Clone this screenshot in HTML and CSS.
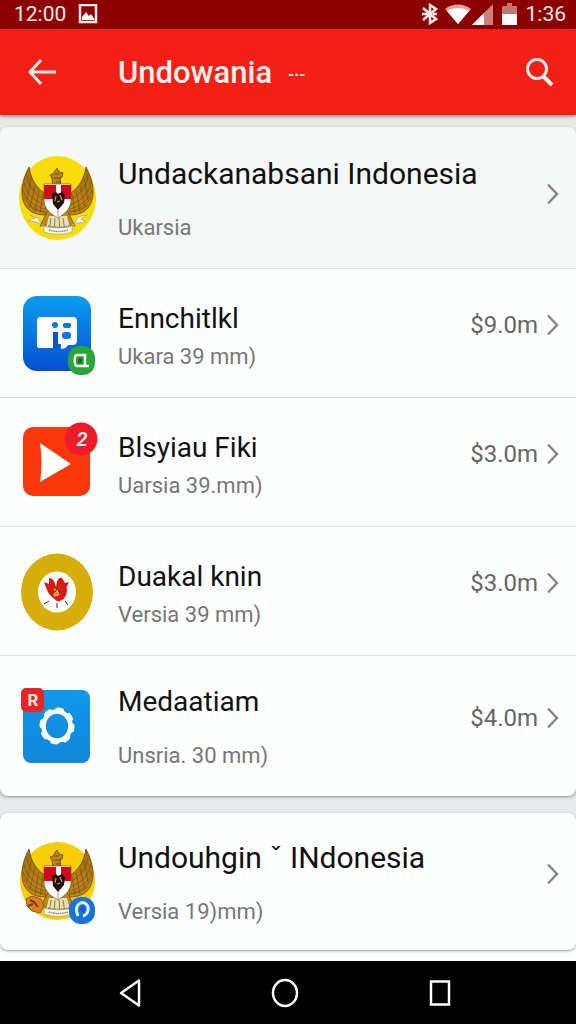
FILE: index.html
```html
<!DOCTYPE html>
<html lang="id">
<head>
    <meta charset="UTF-8">
    <meta name="viewport" content="width=device-width, initial-scale=1">
    <title>Undowania</title>
    <link rel="stylesheet" href="styles.css">
</head>
<body>
    <!-- shared drawings -->
    <svg class="defs" aria-hidden="true">
        <defs>
            <linearGradient id="blue" x1="0" y1="0" x2="0" y2="1">
                <stop offset="0" stop-color="#0c9cf0"/>
                <stop offset="1" stop-color="#0550d2"/>
            </linearGradient>
            <linearGradient id="sky" x1="0" y1="0" x2="0" y2="1">
                <stop offset="0" stop-color="#1098e8"/>
                <stop offset="1" stop-color="#1286dc"/>
            </linearGradient>
            <linearGradient id="wing" x1="0" y1="0" x2="0" y2="1">
                <stop offset="0" stop-color="#a06c14"/>
                <stop offset="1" stop-color="#c48a18"/>
            </linearGradient>
            <g id="half-wing">
                <path d="M11 7C3 22 2 36 7 45c4 7 11 10 21 10V34C18 28 13 19 11 7z" fill="url(#wing)" stroke="#664509" stroke-width="0.8"/>
                <path d="M9 15c1 12 9 20 18 25M6 22c2 12 10 19 21 23M5 30c3 10 11 16 22 19M6 37c4 8 11 12 21 15M9 45c5 4 11 6 17 7M13 18l-4 22M17 26l-5 21M21 30l-4 22M25 34l-3 19" fill="none" stroke="#6b4a10" stroke-width="0.6"/>
            </g>
            <symbol id="garuda" viewBox="0 0 80 88">
                <use href="#half-wing"/>
                <use href="#half-wing" transform="matrix(-1 0 0 1 79 0)"/>
                <path d="M35 26l-1-8-2-3 3-1 2-3 2-3 2 4 4 1-1 4-2 1 1 8z" fill="#b98718" stroke="#5d400a" stroke-width="0.8"/>
                <path d="M37 14h4M36 18h7M38 22h5" stroke="#5d400a" stroke-width="0.8"/>
                <path d="M31 48l-9 18 7-1 8-13zM48 48l9 18-7-1-8-13z" fill="#bd861a" stroke="#6b4a10" stroke-width="0.8"/>
                <path d="M31 56l-4 16h26l-4-16z" fill="#e8dfb0"/>
                <path d="M33 58l-2 13M37 58l-1 14M41 58l1 14M45 58l2 13" stroke="#8b8247"/>
                <path d="M26 24h27v16c0 9-7 14-13 18-7-4-14-9-14-18z" fill="#fff" stroke="#7b3c12" stroke-width="0.6"/>
                <path d="M26 25h12v14H26zM43 25h10v14H43z" fill="#d20b1a"/>
                <path d="M34 34l4-2 2 2 4-2 3 3-1 8-6 7-5-6z" fill="#201009"/>
                <path d="M38 36l-1 5M42 35l2 5M39 42l3-1" stroke="#d7a24b" stroke-width="1.2"/>
                <path d="M40 50v7" stroke="#e27b91"/>
                <path d="M12 55l8 3 3 6 5 3h24l5-4 3-6 9-2-6 4 5 3-9 1-5 3v6c-9 3-19 3-28 0v-6l-7-4-9-1 7-3z" fill="#f9f8ed" stroke="#a7a180" stroke-width="0.7"/>
                <path d="M31 70c6 2 13 2 19 0M30 66c7 2 14 2 21 0" fill="none" stroke="#7e8470" stroke-width="1.4" stroke-dasharray="1.5 .7"/>
            </symbol>
            <symbol id="chevron" viewBox="0 0 14 22">
                <path d="M2 1.500l9 9.500-9 9.500" fill="none" stroke="#858585" stroke-width="2.400"/>
            </symbol>
        </defs>
    </svg>

    <div class="status-bar">
        <span>12:00</span>
        <svg width="20" height="20" viewBox="0 0 20 20">
            <path d="M2 1h16v17H2z" fill="none" stroke="#ffe9e7" stroke-width="2.500"/>
            <path d="M4 16v-3l4-5 3 4 2-2 4 6z" fill="#fff"/>
        </svg>
        <div class="status-icons">
            <svg width="16" height="22" viewBox="0 0 16 22">
                <path d="M1 5l13 11-6 4V2l6 4L1 17M0 11h6M11 11h4" fill="none" stroke="#ffe9e7" stroke-width="2.500"/>
            </svg>
            <svg width="26" height="22" viewBox="0 0 26 22">
                <path d="M0 6C7 0 19 0 26 6L13 21z" fill="#e0a19f"/>
                <path d="M2 8c7-4 15-4 22 0L13 21z" fill="#fff"/>
            </svg>
            <svg width="21" height="22" viewBox="0 0 21 22">
                <path d="M0 22L21 1v21z" fill="#cc7f7d"/>
                <path d="M0 22L12 10v12z" fill="#fff"/>
            </svg>
            <svg class="battery" width="15" height="22" viewBox="0 0 15 22">
                <path d="M0 3h5V0h5v3h5v8H0z" fill="#c27573"/>
                <path d="M0 11h15v11H0z" fill="#fff"/>
            </svg>
            <span>1:36</span>
        </div>
    </div>

    <header class="app-bar">
        <button class="bar-button" type="button" aria-label="Kembali">
            <svg width="30" height="28" viewBox="0 0 30 28">
                <path d="M29 14H3M14 2L3 14l11 12" fill="none" stroke="#fff0ee" stroke-width="3"/>
            </svg>
        </button>
        <h1>Undowania <span class="dash">-·-</span></h1>
        <button class="bar-button" type="button" aria-label="Cari">
            <svg width="28" height="30" viewBox="0 0 28 30">
                <circle cx="11" cy="12" r="9.500" fill="none" stroke="#fff0ee" stroke-width="3"/>
                <path d="M17 19l9 9" stroke="#fff0ee" stroke-width="4"/>
            </svg>
        </button>
    </header>

    <main>
        <section class="card">
            <a class="row tall featured" href="#">
                <svg class="icon" viewBox="0 0 80 88">
                    <ellipse cx="39.500" cy="44" rx="38.500" ry="42" fill="#f8dc0b"/>
                    <use href="#garuda" y="6" width="80" height="88"/>
                </svg>
                <div class="text">
                    <h2>Undackanabsani Indonesia</h2>
                    <p>Ukarsia</p>
                </div>
                <svg class="chevron"><use href="#chevron"/></svg>
            </a>
            <a class="row" href="#">
                <svg class="icon" viewBox="0 0 80 88">
                    <rect x="5" y="7" width="68" height="75" rx="14" fill="url(#blue)"/>
                    <path d="M22 28h33c3 0 4 2 4 4v20c0 3-2 4-5 4h-4c-2 3-4 4-7 4v-5h-3v5h-4v-1H22c-3 0-3-2-3-4V32c0-2 1-4 3-4z" fill="#fff"/>
                    <circle cx="37" cy="36" r="3" fill="#0877df"/>
                    <path d="M35 43h5v17h-5z" fill="#0757c8"/>
                    <rect x="45" y="34" width="8" height="5" rx="2" fill="#0877df"/>
                    <rect x="44" y="43" width="9" height="7" rx="3" fill="#0877df"/>
                    <rect x="50" y="57" width="27" height="29" rx="12" fill="#28a637"/>
                    <path d="M59 66h8v11h-8c-3 0-3-11 0-11zM66 77h5" fill="none" stroke="#fff" stroke-width="2.500"/>
                    <rect x="60" y="69" width="4" height="5" fill="#146f29"/>
                </svg>
                <div class="text">
                    <h2>Ennchitlkl</h2>
                    <p>Ukara 39 mm)</p>
                </div>
                <span class="price">$9.0m</span>
                <svg class="chevron"><use href="#chevron"/></svg>
            </a>
            <a class="row" href="#">
                <svg class="icon" viewBox="0 0 80 88">
                    <rect x="5" y="9" width="67" height="69" rx="10" fill="#fa3708"/>
                    <path d="M22 25l31 21-31 18c2-12 2-25 0-39z" fill="#fff"/>
                    <circle cx="63" cy="21" r="16.500" fill="#ec1d29"/>
                    <text class="badge-number" x="64" y="28">2</text>
                </svg>
                <div class="text">
                    <h2>Blsyiau Fiki</h2>
                    <p>Uarsia 39.mm)</p>
                </div>
                <span class="price">$3.0m</span>
                <svg class="chevron"><use href="#chevron"/></svg>
            </a>
            <a class="row" href="#">
                <svg class="icon" viewBox="0 0 80 88">
                    <ellipse cx="39" cy="45" rx="36" ry="38.500" fill="#d5ae0c"/>
                    <ellipse cx="39" cy="45" rx="19" ry="20.500" fill="#fff"/>
                    <path d="M31 31c4 0 6 4 7 9 1-6 2-10 6-9l3 5 4-1c-1 3-3 4-2 8 0 7-5 12-10 11-4-3-8-6-10-11l-3-8 5 2z" fill="#d91916"/>
                    <path d="M36 42l6 5M41 41l-5 7M36 49l5-2" stroke="#eaaf45" stroke-width="2"/>
                    <path d="M37 45l3-4 2 6M31 54l-5 3M39 56v5M47 54l3 4" fill="none" stroke="#452313"/>
                </svg>
                <div class="text">
                    <h2>Duakal knin</h2>
                    <p>Versia 39 mm)</p>
                </div>
                <span class="price">$3.0m</span>
                <svg class="chevron"><use href="#chevron"/></svg>
            </a>
            <a class="row tall" href="#">
                <svg class="icon" viewBox="0 0 80 88">
                    <rect x="5" y="8" width="67" height="73" rx="8" fill="url(#sky)"/>
                    <ellipse cx="39" cy="44" rx="15" ry="16" fill="none" stroke="#fff" stroke-width="5" stroke-linecap="round" stroke-dasharray="4 8.200"/>
                    <ellipse cx="39" cy="44" rx="13.500" ry="14.500" fill="none" stroke="#fff" stroke-width="4.500"/>
                    <rect x="3" y="6" width="23" height="24" rx="5" fill="#e42627"/>
                    <text class="badge-letter" x="15" y="24">R</text>
                </svg>
                <div class="text">
                    <h2>Medaatiam</h2>
                    <p>Unsria. 30 mm)</p>
                </div>
                <span class="price">$4.0m</span>
                <svg class="chevron"><use href="#chevron"/></svg>
            </a>
        </section>

        <section class="card">
            <a class="row tall last" href="#">
                <svg class="icon" viewBox="0 0 80 88">
                    <ellipse cx="39.500" cy="43" rx="37.500" ry="39" fill="#f7cd05"/>
                    <use href="#garuda" y="4" width="80" height="88"/>
                    <path d="M8 61l6-3 9 3 3 7-4 7-8-2-5-5z" fill="#d6812c" stroke="#985417"/>
                    <path d="M12 62l4 2 4 5M10 68l5-2" fill="none" stroke="#7e3511" stroke-width="2"/>
                    <rect x="51" y="59" width="26" height="27" rx="12" fill="#1475e0"/>
                    <path d="M60 78c-6-14 8-17 10-9 1 5-2 8-5 9" fill="none" stroke="#e7f3ff" stroke-width="3"/>
                    <path d="M62 71c3-6 6-1 4 4z" fill="#3150bd"/>
                </svg>
                <div class="text">
                    <h2>Undouhgin ˇ INdonesia</h2>
                    <p>Versia 19)mm)</p>
                </div>
                <svg class="chevron"><use href="#chevron"/></svg>
            </a>
        </section>
    </main>

    <nav class="nav-bar">
        <button type="button" aria-label="Kembali">
            <svg width="24" height="30" viewBox="0 0 24 30">
                <path d="M21 2.500v25L3 15z" fill="none" stroke="#fff" stroke-width="2.500" stroke-linejoin="round"/>
            </svg>
        </button>
        <button type="button" aria-label="Beranda">
            <svg width="28" height="30" viewBox="0 0 28 30">
                <ellipse cx="14" cy="15" rx="12" ry="13" fill="none" stroke="#fff" stroke-width="2.500"/>
            </svg>
        </button>
        <button type="button" aria-label="Terbaru">
            <svg width="24" height="30" viewBox="0 0 24 30">
                <rect x="3" y="3.500" width="18" height="23" fill="none" stroke="#fff" stroke-width="2.500"/>
            </svg>
        </button>
    </nav>
</body>
</html>
```
FILE: styles.css
```css
* {
    box-sizing: border-box;
}

body {
    display: flex;
    flex-direction: column;
    min-height: 100vh;
    margin: 0;
    font-family: Roboto, "Liberation Sans", sans-serif;
    background-color: #fdfefe;
}

h1, h2, p {
    margin: 0;
    font-weight: 400;
}

svg {
    flex-shrink: 0;
    display: block;
}

button {
    display: flex;
    align-items: center;
    justify-content: center;
    padding: 0;
    border: none;
    background: none;
    cursor: pointer;
}

.defs {
    position: absolute;
    width: 0;
    height: 0;
}

/* status bar */
.status-bar {
    display: flex;
    align-items: center;
    gap: 12px;
    height: 29px;
    padding: 0 10px 2px 14px;
    font-size: 21px;
    color: #ffe9e7;
    background-color: #8d0000;
}

.status-icons {
    display: flex;
    align-items: center;
    gap: 1px;
    margin-left: auto;
}

.status-icons svg:first-child {
    margin-right: 6px;
}

.battery {
    margin: 0 8px;
}

/* app bar */
.app-bar {
    position: relative;
    display: flex;
    align-items: center;
    height: 86px;
    padding: 0 12px 0 18px;
    color: #fff0ee;
    background-color: #f21f15;
    box-shadow: 0 1px 4px rgba(0, 0, 0, 0.5);
}

.app-bar h1 {
    flex: 1;
    margin-left: 52px;
    font-size: 31px;
    font-weight: 500;
}

.dash {
    margin-left: 8px;
    font-size: 16px;
    font-weight: 700;
    vertical-align: middle;
}

.bar-button {
    width: 48px;
    height: 48px;
}

/* lists */
main {
    display: flex;
    flex-direction: column;
    flex: 1;
    gap: 17px;
    padding-top: 12px;
    background: linear-gradient(#e8ebeb, #e8ebeb) no-repeat 0 0 / 100% 720px;
}

.card {
    overflow: hidden;
    border-radius: 8px;
    background-color: #fdfefe;
    box-shadow: 0 1px 3px rgba(0, 0, 0, 0.4);
}

.row {
    display: flex;
    align-items: center;
    min-height: 129px;
    padding: 0 16px 0 18px;
    color: #111;
    text-decoration: none;
    border-top: 1px solid #dcdfdf;
}

.row:first-child {
    border-top: none;
}

.row.tall {
    min-height: 141px;
}

.row.last {
    min-height: 137px;
}

.row.featured {
    background-color: #f6f8f8;
}

.icon {
    width: 80px;
    height: 88px;
}

.text {
    flex: 1;
    min-width: 0;
    margin-left: 20px;
    padding-top: 8px;
}

.text h2 {
    font-size: 28px;
    line-height: 40px;
}

.text p {
    font-size: 22px;
    line-height: 36px;
    color: #777;
}

.featured h2,
.last h2 {
    font-size: 30px;
}

.tall .text {
    padding-top: 4px;
}

.tall p {
    margin-top: 16px;
}

.price {
    margin-right: 8px;
    padding-bottom: 16px;
    font-size: 24px;
    line-height: 28px;
    color: #666;
}

.chevron {
    width: 14px;
    height: 22px;
    margin-bottom: 16px;
}

.featured .chevron {
    margin-bottom: 8px;
}

.badge-number {
    font-size: 20px;
    font-style: italic;
    font-weight: 500;
    text-anchor: middle;
    fill: #fff;
}

.badge-letter {
    font-size: 17px;
    font-weight: 700;
    text-anchor: middle;
    fill: #ffe3df;
}

/* system navigation */
.nav-bar {
    display: flex;
    height: 63px;
    padding: 0 58px 0 52px;
    background-color: #000;
}

.nav-bar button {
    flex: 1;
}
```
